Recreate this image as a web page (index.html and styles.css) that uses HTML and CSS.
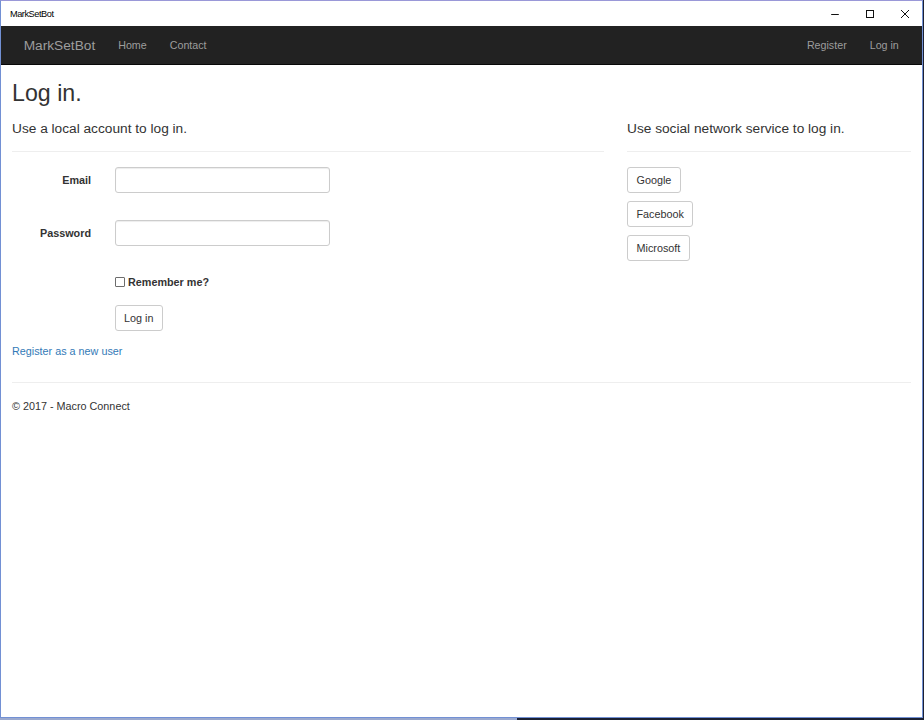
FILE: index.html
```html
<!DOCTYPE html>
<html lang="en">
<head>
<meta charset="utf-8">
<title>MarkSetBot</title>
<link rel="stylesheet" href="styles.css">
</head>
<body>
<div class="window">
  <div class="titlebar">
    <span class="title">MarkSetBot</span>
    <div class="controls">
      <span class="ctl"><svg width="10" height="10" viewBox="0 0 10 10"><path d="M1.2 5.5H8.8" stroke="#111" stroke-width="1" fill="none"/></svg></span>
      <span class="ctl"><svg width="10" height="10" viewBox="0 0 10 10"><rect x="1.5" y="1.5" width="7" height="7" stroke="#111" stroke-width="1" fill="none"/></svg></span>
      <span class="ctl"><svg width="10" height="10" viewBox="0 0 10 10"><path d="M1 1L9 9M9 1L1 9" stroke="#111" stroke-width="1" fill="none"/></svg></span>
    </div>
  </div>
  <nav class="navbar">
    <div class="nav-group">
      <a class="brand" href="#">MarkSetBot</a>
      <a href="#">Home</a>
      <a href="#">Contact</a>
    </div>
    <div class="nav-group">
      <a href="#">Register</a>
      <a href="#">Log in</a>
    </div>
  </nav>
  <main class="body-content">
    <h2 class="page-title">Log in.</h2>
    <div class="row">
      <section class="local-login">
        <h4 class="section-title">Use a local account to log in.</h4>
        <hr class="rule">
        <form class="login-form">
          <div class="form-group">
            <label class="control-label" for="email">Email</label>
            <div class="field">
              <input class="form-control" id="email" type="text">
              <span class="validation"></span>
            </div>
          </div>
          <div class="form-group">
            <label class="control-label" for="password">Password</label>
            <div class="field">
              <input class="form-control" id="password" type="password">
              <span class="validation"></span>
            </div>
          </div>
          <div class="checkbox-row">
            <label class="checkbox-label"><input class="checkbox" type="checkbox">Remember me?</label>
          </div>
          <div class="submit-row">
            <button class="btn" type="button">Log in</button>
          </div>
        </form>
        <p class="register-link"><a href="#">Register as a new user</a></p>
      </section>
      <section class="social-login">
        <h4 class="section-title">Use social network service to log in.</h4>
        <hr class="rule">
        <div class="social-list">
          <button class="btn" type="button">Google</button>
          <button class="btn" type="button">Facebook</button>
          <button class="btn" type="button">Microsoft</button>
        </div>
      </section>
    </div>
    <hr class="footer-rule">
    <footer class="footer">
      <p>&copy; 2017 - Macro Connect</p>
    </footer>
  </main>
</div>
</body>
</html>
```

FILE: styles.css
```css
* {
  box-sizing: border-box;
}

html, body {
  margin: 0;
  padding: 0;
}

body {
  width: 924px;
  height: 720px;
  overflow: hidden;
  background: linear-gradient(to right, #9aa9cf 0, #9aa9cf 56%, #1b2133 56%, #1b2133 100%);
  font-family: "Liberation Sans", Arial, sans-serif;
  color: #333;
}

.window {
  width: 923px;
  height: 718px;
  border: 1px solid #7290d4;
  border-top-color: #9a98d8;
  background: #fff;
  display: flex;
  flex-direction: column;
}

.titlebar {
  height: 25px;
  flex: none;
  display: flex;
  align-items: center;
  justify-content: space-between;
  background: #fff;
}

.title {
  font-size: 9.2px;
  letter-spacing: -0.45px;
  padding-left: 9px;
  color: #000;
}

.controls {
  display: flex;
}

.ctl {
  width: 35px;
  height: 25px;
  display: flex;
  align-items: center;
  justify-content: center;
}

.navbar {
  height: 39px;
  flex: none;
  background: #222;
  border-bottom: 1px solid #080808;
  display: flex;
  align-items: center;
  justify-content: space-between;
  padding: 1px 11.7px 0;
}

.nav-group {
  display: flex;
  align-items: center;
}

.navbar a {
  color: #9d9d9d;
  text-decoration: none;
  font-size: 10.7px;
  line-height: 15.6px;
  padding: 0 11.5px;
}

.navbar .brand {
  font-size: 13.7px;
  line-height: 18px;
  padding-left: 11px;
}

.body-content {
  padding: 0 11px;
}

.page-title {
  font-size: 23.2px;
  font-weight: normal;
  line-height: 1.1;
  margin: 15.6px 0 7.8px;
  color: #333;
}

.row {
  display: grid;
  grid-template-columns: 592px 1fr;
  column-gap: 23px;
}

.section-title {
  font-size: 13.7px;
  font-weight: normal;
  line-height: 1.1;
  margin: 7px 0 0;
}

.rule {
  border: 0;
  border-top: 1px solid #eee;
  height: 0;
  margin: 14.6px 0 15.3px;
}

.login-form {
  margin: 0;
}

.form-group {
  display: grid;
  grid-template-columns: 79px 215px;
  column-gap: 24px;
  margin-bottom: 11.7px;
}

.control-label {
  font-size: 10.8px;
  font-weight: bold;
  line-height: 15.7px;
  padding-top: 6px;
  text-align: right;
}

.form-control {
  display: block;
  width: 215px;
  height: 26px;
  margin: 0;
  padding: 0 9px;
  border: 1px solid #ccc;
  border-radius: 3px;
  box-shadow: inset 0 1px 1px rgba(0, 0, 0, 0.075);
  background: #fff;
  font-family: inherit;
  font-size: 11px;
}

.validation {
  display: block;
  height: 15.6px;
}

.checkbox-row {
  margin-left: 102.5px;
  padding-top: 1.5px;
  font-size: 10.8px;
  line-height: 15.7px;
  font-weight: bold;
}

.checkbox-label {
  display: inline-block;
}

.checkbox {
  appearance: none;
  -webkit-appearance: none;
  width: 10px;
  height: 10px;
  margin: 0 3.5px 0 0;
  border: 1px solid #6d6d6d;
  border-radius: 1px;
  background: #fff;
  vertical-align: -1px;
}

.submit-row {
  margin: 14.8px 0 12.5px 102.5px;
}

.btn {
  display: inline-block;
  height: 26px;
  padding: 1px 8.5px 0;
  border: 1px solid #ccc;
  border-radius: 3px;
  background: #fff;
  color: #333;
  font-family: inherit;
  font-size: 10.8px;
  line-height: 15.7px;
  cursor: pointer;
}

.register-link {
  margin: 0;
  font-size: 10.8px;
  line-height: 15.7px;
}

.register-link a {
  color: #337ab7;
  text-decoration: none;
}

.social-list {
  display: flex;
  flex-direction: column;
  align-items: flex-start;
  gap: 8px;
}

.footer-rule {
  border: 0;
  border-top: 1px solid #eee;
  height: 0;
  margin: 22px 0 0;
}

.footer p {
  margin: 16px 0 0;
  font-size: 10.8px;
  line-height: 15.7px;
}
```
